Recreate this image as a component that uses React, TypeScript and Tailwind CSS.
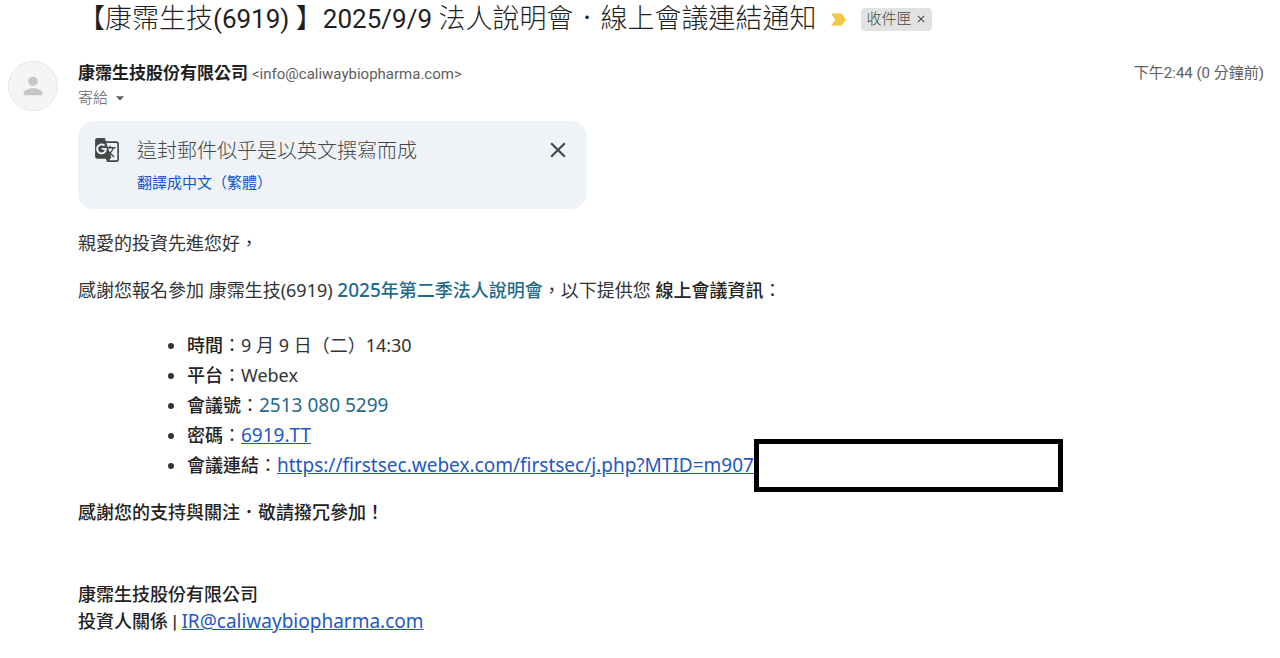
import type { ReactNode } from "react";
import clsx from "clsx";
import {
  MdArrowDropDown,
  MdClose,
  MdGTranslate,
  MdLabelImportant,
  MdPerson,
} from "react-icons/md";

const UI_FONT = "font-[Roboto,'Noto_Sans_CJK_TC',sans-serif]";
const BODY_FONT = "font-['Noto_Sans','Noto_Sans_CJK_TC',sans-serif]";

const COMPANY = "康霈生技股份有限公司";

interface MeetingItem {
  label: string;
  content: ReactNode;
}

const meetingItems: MeetingItem[] = [
  { label: "時間", content: "9 月 9 日（二）14:30" },
  { label: "平台", content: "Webex" },
  {
    label: "會議號",
    content: <span className="text-[19px] text-[#1f6b8c]">2513 080 5299</span>,
  },
  { label: "密碼", content: <MailLink href="#">6919.TT</MailLink> },
  {
    label: "會議連結",
    content: (
      <span className="relative">
        <MailLink href="#">https://firstsec.webex.com/firstsec/j.php?MTID=m907</MailLink>
        <span className="absolute -top-3.5 left-full h-[53px] w-[309px] border-5 border-black bg-white" />
      </span>
    ),
  },
];

function MailLink({ href, children }: { href: string; children: ReactNode }) {
  return (
    <a href={href} className="text-[19px] font-normal text-[#1f58c4] underline">
      {children}
    </a>
  );
}

function SubjectBar() {
  return (
    <div className="flex items-center">
      <h1 className="text-[27px] leading-[38px] font-light text-[#1f1f1f]">
        【康霈生技<span className="text-[26px] font-normal">(6919) </span>】
        <span className="text-[26px] font-normal">2025/9/9 </span>
        法人說明會．線上會議連結通知
      </h1>
      <MdLabelImportant className="ml-3 size-[21px] text-[#f2c744]" />
      <span className="ml-3 flex h-[23px] items-center gap-1 rounded bg-[#e1e3e1] px-[5px] text-[15px] font-light text-[#444746]">
        收件匣
        <button type="button" aria-label="移除標籤">
          <MdClose className="size-3" />
        </button>
      </span>
    </div>
  );
}

function SenderRow() {
  return (
    <div className="flex items-start justify-between">
      <div>
        <div className="flex items-baseline gap-1 leading-6">
          <span className="text-[17px] font-bold text-[#1f1f1f]">{COMPANY}</span>
          <span className="text-[15px] text-[#5e5e5e]">&lt;info@caliwaybiopharma.com&gt;</span>
        </div>
        <button type="button" className="flex items-center gap-0.5 text-[15px] leading-6 font-light text-[#5e5e5e]">
          寄給
          <MdArrowDropDown className="size-5" />
        </button>
      </div>
      <span className="text-[15px] leading-6 text-[#5e5e5e]">下午2:44 (0 分鐘前)</span>
    </div>
  );
}

function TranslateBanner() {
  return (
    <div className="mt-[11px] flex h-22 max-w-[509px] items-start rounded-2xl bg-[#eff3f8] px-4 pt-4">
      <MdGTranslate className="size-[26px] text-[#444746]" />
      <div className="ml-[17px] flex-1">
        <p className="text-[20px] leading-7 font-light text-[#444746]">這封郵件似乎是以英文撰寫而成</p>
        <button type="button" className="mt-1.5 block text-[15px] leading-6 text-[#0b57d0]">
          翻譯成中文（繁體）
        </button>
      </div>
      <button type="button" aria-label="關閉">
        <MdClose className="size-[26px] text-[#444746]" />
      </button>
    </div>
  );
}

function MailBody() {
  return (
    <div className={clsx(BODY_FONT, "mt-[19px] text-[18px] leading-[30px] text-[#333]")}>
      <p>親愛的投資先進您好，</p>
      <p className="mt-[17px]">
        感謝您報名參加 康霈生技(6919){" "}
        <span className="font-medium text-[#1f6b8c]">
          <span className="text-[19px]">2025</span>年第二季法人說明會
        </span>
        ，以下提供您 <span className="font-medium text-[#222]">線上會議資訊</span>：
      </p>
      <ul className="mt-[25px] list-disc pl-[109px]">
        {meetingItems.map((item) => (
          <li key={item.label}>
            <span className="font-medium text-[#222]">{item.label}</span>：{item.content}
          </li>
        ))}
      </ul>
      <p className="mt-[17px] font-medium text-[#222]">感謝您的支持與關注．敬請撥冗參加！</p>
      <div className="mt-[54px] leading-[27px] font-medium text-[#222]">
        <p>{COMPANY}</p>
        <p>
          投資人關係<span className="font-[Roboto]"> | </span>
          <MailLink href="mailto:IR@caliwaybiopharma.com">IR@caliwaybiopharma.com</MailLink>
        </p>
      </div>
    </div>
  );
}

export default function App() {
  return (
    <main lang="zh-TW" className={clsx(UI_FONT, "min-h-screen bg-white pr-4 pl-2 pb-6")}>
      <div className="pl-[70px]">
        <SubjectBar />
      </div>
      <div className="mt-[23px] flex items-start gap-5">
        <div className="flex size-[50px] shrink-0 items-center justify-center rounded-full border border-[#e6e6e6] bg-[#f5f5f5]">
          <MdPerson className="size-7 text-[#c6c6c6]" />
        </div>
        <div className="min-w-0 flex-1">
          <SenderRow />
          <TranslateBanner />
          <MailBody />
        </div>
      </div>
    </main>
  );
}
